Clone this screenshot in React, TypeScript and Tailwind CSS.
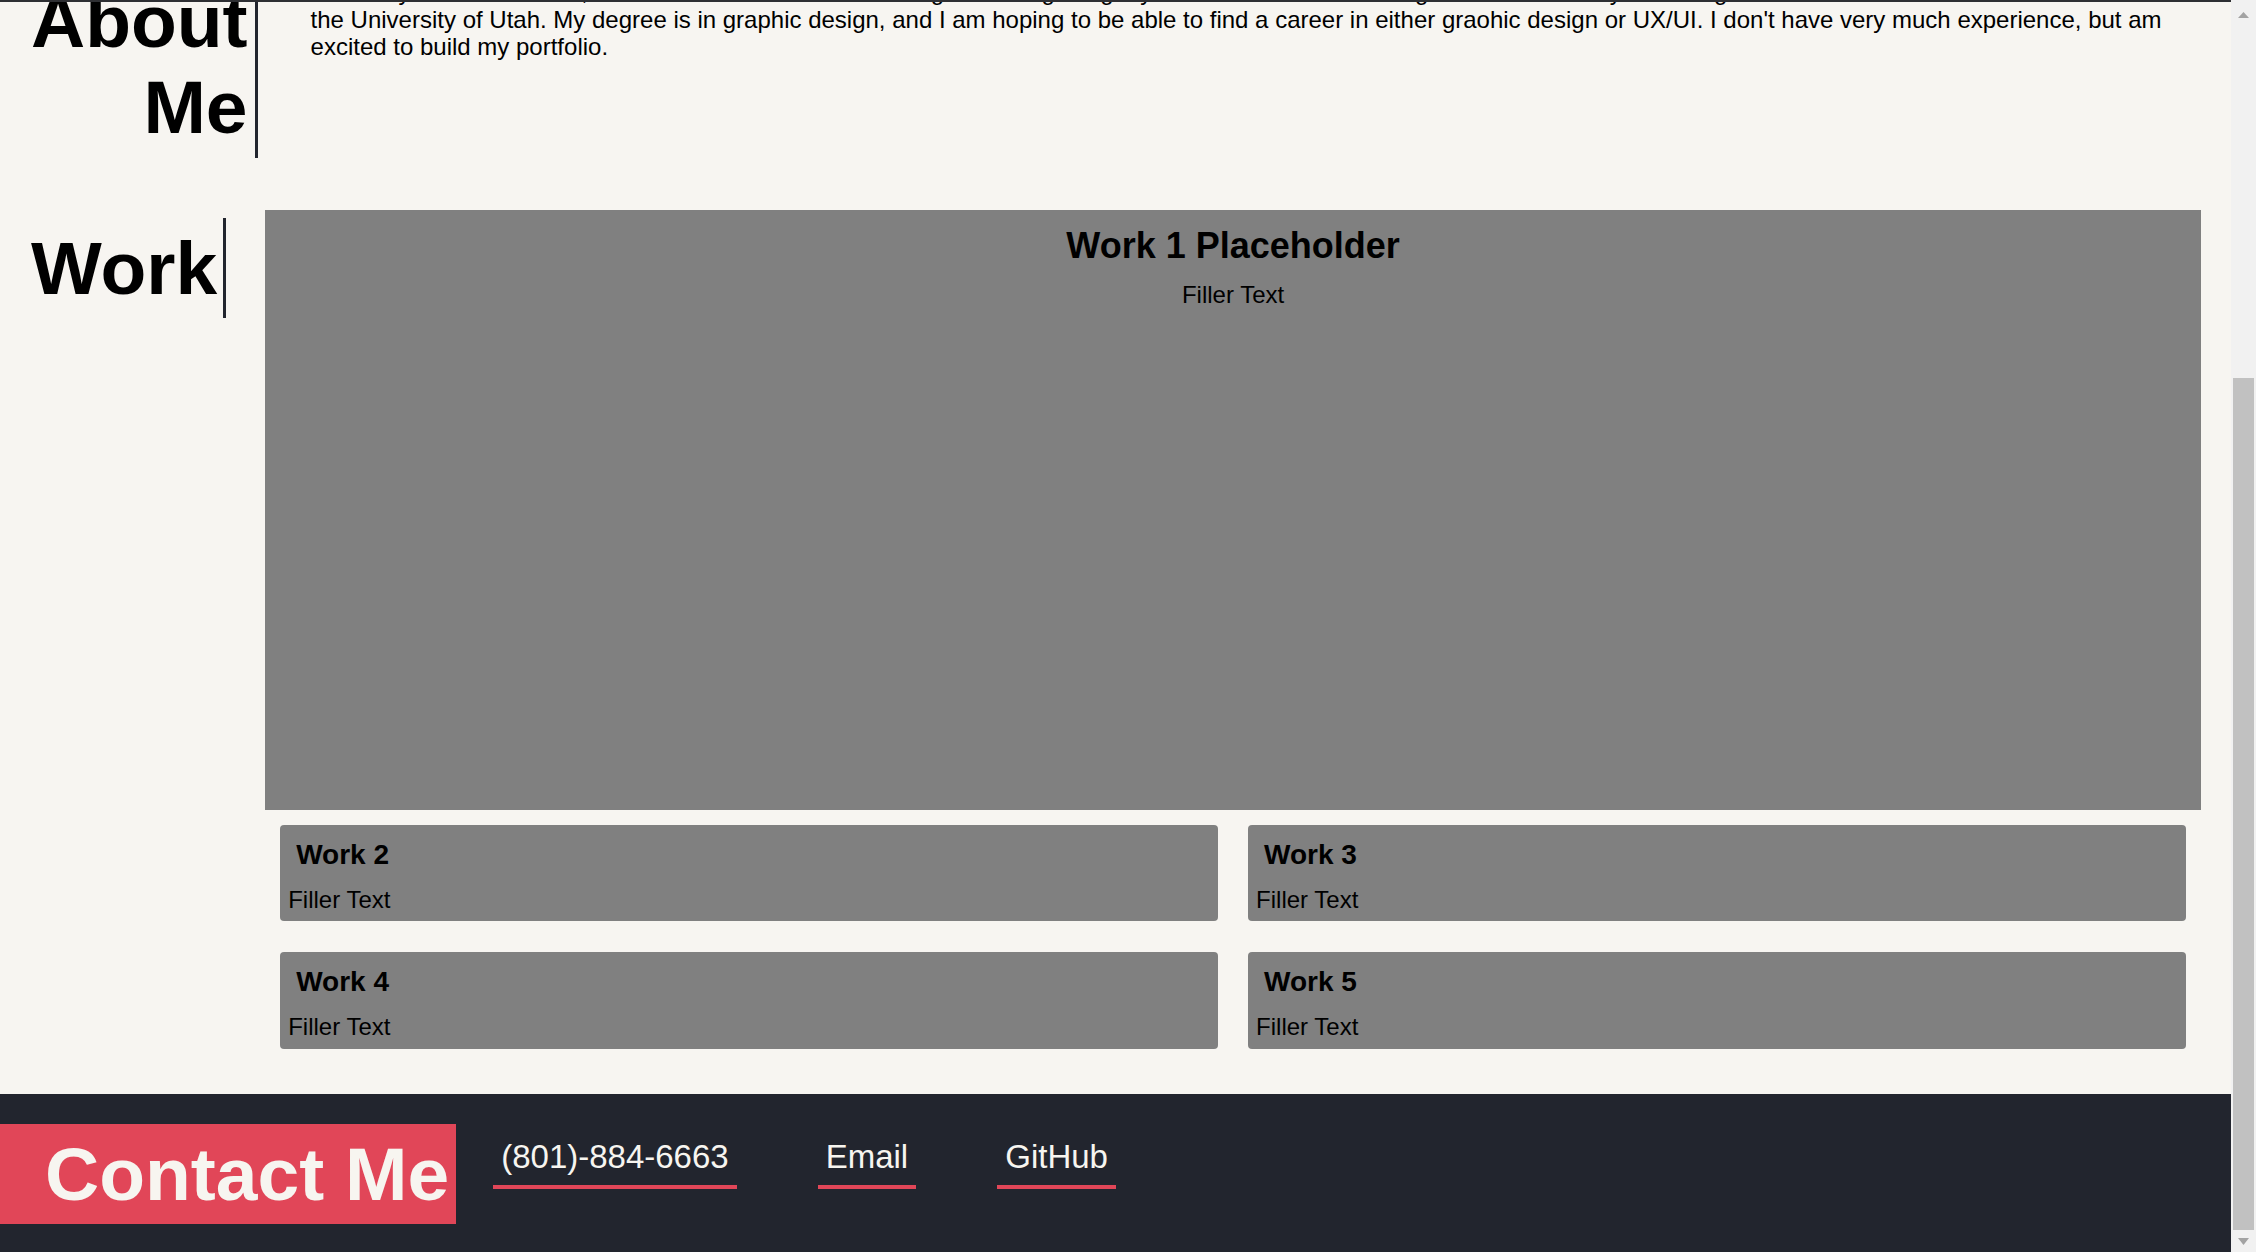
const works = [
  { title: "Work 2", text: "Filler Text" },
  { title: "Work 3", text: "Filler Text" },
  { title: "Work 4", text: "Filler Text" },
  { title: "Work 5", text: "Filler Text" },
];

const links = ["(801)-884-6663", "Email", "GitHub"];

function Scrollbar() {
  return (
    <div className="flex w-[25px] shrink-0 flex-col bg-[#f1f1f1]">
      <div className="flex h-[28px] justify-center pt-[12px]">
        <svg width="11" height="6" viewBox="0 0 11 6">
          <path d="M5.5 0 L11 6 L0 6 Z" fill="#a3a3a3" />
        </svg>
      </div>
      <div className="ml-[2px] mt-[350px] h-[852px] w-[21px] bg-[#c1c1c1]" />
      <div className="flex justify-center pt-[8px]">
        <svg width="11" height="7" viewBox="0 0 11 7">
          <path d="M0 0 L11 0 L5.5 7 Z" fill="#a3a3a3" />
        </svg>
      </div>
    </div>
  );
}

export default function App() {
  return (
    <div className="flex h-screen overflow-hidden bg-[#f7f5f1] font-['Liberation_Sans',Arial,sans-serif] text-black">
      <div className="relative flex min-w-0 flex-1 flex-col overflow-hidden">
        {/* edge of the sticky nav, mostly scrolled out of view */}
        <div className="absolute left-0 right-0 top-0 z-10 h-[2px] bg-[#2e2f33]" />

        <section className="-mt-[29px] flex items-start">
          <h1 className="ml-[31px] shrink-0 border-r-[3px] border-[#22252e] py-[7px] pr-[7px] text-right text-[75px] font-bold leading-[1.15]">
            About
            <br />
            Me
          </h1>
          <p className="ml-[53px] mr-[30px] mt-[7px] flex-1 text-[24px] leading-[1.15]">
            Hello! My name is Jordan, and I am a senior who is working towards getting my Bachelor of Fine Arts degree. I am currently attending
            <br />
            the University of Utah. My degree is in graphic design, and I am hoping to be able to find a career in either graohic design or UX/UI. I don't have very much experience, but am
            <br />
            excited to build my portfolio.
          </p>
        </section>

        <section className="mt-[52px] flex items-start pb-[45px]">
          <h1 className="ml-[31px] mt-[8px] shrink-0 border-r-[3px] border-[#22252e] py-[7px] pr-[6px] text-[75px] font-bold leading-[1.15]">
            Work
          </h1>
          <div className="ml-[39px] mr-[30px] flex-1">
            <div className="h-[600px] bg-[#808080] pt-[15px] text-center">
              <h2 className="text-[36px] font-bold leading-[1.15]">Work 1 Placeholder</h2>
              <p className="mt-[15px] text-[24px] leading-[1.15]">Filler Text</p>
            </div>
            <div className="mt-[15px] grid grid-cols-2 gap-x-[30px] gap-y-[31px] px-[15px]">
              {works.map((w) => (
                <div key={w.title} className="rounded-[4px] bg-[#808080] pb-[8px] pt-[14px]">
                  <h3 className="ml-[16px] text-[28px] font-bold leading-[1.15]">{w.title}</h3>
                  <p className="ml-[8px] mt-[15px] text-[24px] leading-[1.15]">{w.text}</p>
                </div>
              ))}
            </div>
          </div>
        </section>

        <footer className="flex items-start bg-[#22252e] pb-[30px] pt-[30px]">
          <h1 className="shrink-0 bg-[#e14658] py-[7px] pl-[45px] pr-[7px] text-[75px] font-bold leading-[1.15] text-[#f7f5f0]">
            Contact Me
          </h1>
          <div className="ml-[37px] mt-[14px] flex gap-[81px]">
            {links.map((l) => (
              <a
                key={l}
                href="#"
                className="border-b-4 border-[#e14658] px-[8px] pb-[9px] text-[33px] leading-[1.15] text-[#f7f5f0]"
              >
                {l}
              </a>
            ))}
          </div>
        </footer>
      </div>
      <Scrollbar />
    </div>
  );
}
